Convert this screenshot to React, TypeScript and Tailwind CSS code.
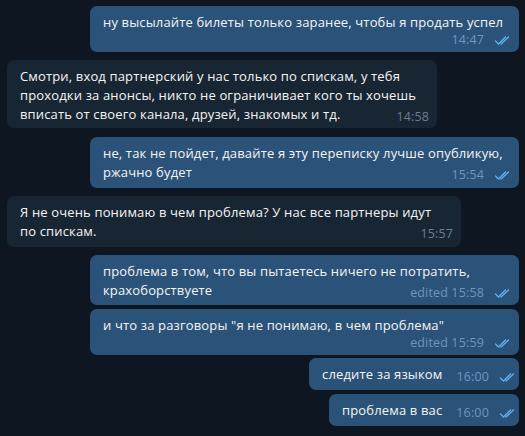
import React from "react";

const Checks = () => (
  <svg width="17" height="11" viewBox="0 0 17 11" fill="none" stroke="#5fb0f0" strokeWidth="1.4" strokeLinecap="round" strokeLinejoin="round">
    <path d="M1.5 6 L4.5 9 L11.5 2" />
    <path d="M7 9 L14.5 2" />
  </svg>
);

type Msg = {
  out: boolean;
  lines: string[];
  time: string;
  below?: boolean;
  w?: string;
  gap: string;
  pad: string;
};

const msgs: Msg[] = [
  { out: true, lines: ["ну высылайте билеты только заранее, чтобы я продать успел"], time: "14:47", below: true, gap: "mt-0", w: "w-[429px]", pad: "pt-[7px] pb-[5px]" },
  {
    out: false,
    lines: [
      "Смотри, вход партнерский у нас только по спискам, у тебя",
      "проходки за анонсы, никто не ограничивает кого ты хочешь",
      "вписать от своего канала, друзей, знакомых и тд.",
    ],
    time: "14:58",
    gap: "mt-[8px]",
    w: "w-[430px]",
    pad: "pt-[7px] pb-[4px]",
  },
  { out: true, lines: ["не, так не пойдет, давайте я эту переписку лучше опубликую,", "ржачно будет"], time: "15:54", gap: "mt-[9px]", w: "w-[429px]", pad: "pt-[7px] pb-[6px]" },
  { out: false, lines: ["Я не очень понимаю в чем проблема? У нас все партнеры идут", "по спискам."], time: "15:57", gap: "mt-[8px]", w: "w-[454px]", pad: "pt-[7px] pb-[6px]" },
  { out: true, lines: ["проблема в том, что вы пытаетесь ничего не потратить,", "крахоборствуете"], time: "edited 15:58", gap: "mt-[8px]", w: "w-[429px]", pad: "pt-[7px] pb-[5px]" },
  { out: true, lines: ["и что за разговоры \"я не понимаю, в чем проблема\""], time: "edited 15:59", below: true, gap: "mt-[4px]", w: "w-[429px]", pad: "pt-[7px] pb-[5px]" },
  { out: true, lines: ["следите за языком"], time: "16:00", gap: "mt-[3px]", w: "w-[210px]", pad: "pt-[7px] pb-[6px]" },
  { out: true, lines: ["проблема в вас"], time: "16:00", gap: "mt-[4px]", w: "w-[190px]", pad: "pt-[7px] pb-[6px]" },
];

const Time = ({ out, time, extra }: { out: boolean; time: string; extra: string }) => (
  <div className={`flex items-center gap-[10px] h-[14px] shrink-0 text-[12.5px] leading-[14px] ${out ? "text-[#6e97bf]" : "text-[#6c7f91]"} ${extra}`}>
    <span>{time}</span>
    {out && <Checks />}
  </div>
);

const Bubble = ({ m }: { m: Msg }) => {
  const bg = m.out ? "bg-[#2b5278]" : "bg-[#182533]";
  const body = m.below ? m.lines : m.lines.slice(0, -1);
  const last = m.lines[m.lines.length - 1];
  return (
    <div className={`flex ${m.out ? "justify-end pr-[6px]" : "justify-start pl-[7px]"} ${m.gap}`}>
      <div className={`${bg} ${m.w ?? ""} ${m.pad} rounded-[7px] pl-[13px] pr-[8px] text-[13px] tracking-[0.15px] leading-[19px] text-[#f5f5f5] whitespace-nowrap`}>
        {body.map((l, i) => (
          <div key={i}>{l}</div>
        ))}
        {m.below ? (
          <Time out={m.out} time={m.time} extra="justify-end mt-[1px]" />
        ) : (
          <div className="flex items-start">
            <span>{last}</span>
            <Time out={m.out} time={m.time} extra="ml-auto pl-[14px] mt-[5px]" />
          </div>
        )}
      </div>
    </div>
  );
};

export default function App() {
  return (
    <div className="w-[525px] h-[436px] bg-[#0e1621] overflow-hidden flex flex-col pt-[6px] font-['Open_Sans',sans-serif]">
      {msgs.map((m, i) => (
        <Bubble key={i} m={m} />
      ))}
    </div>
  );
}
